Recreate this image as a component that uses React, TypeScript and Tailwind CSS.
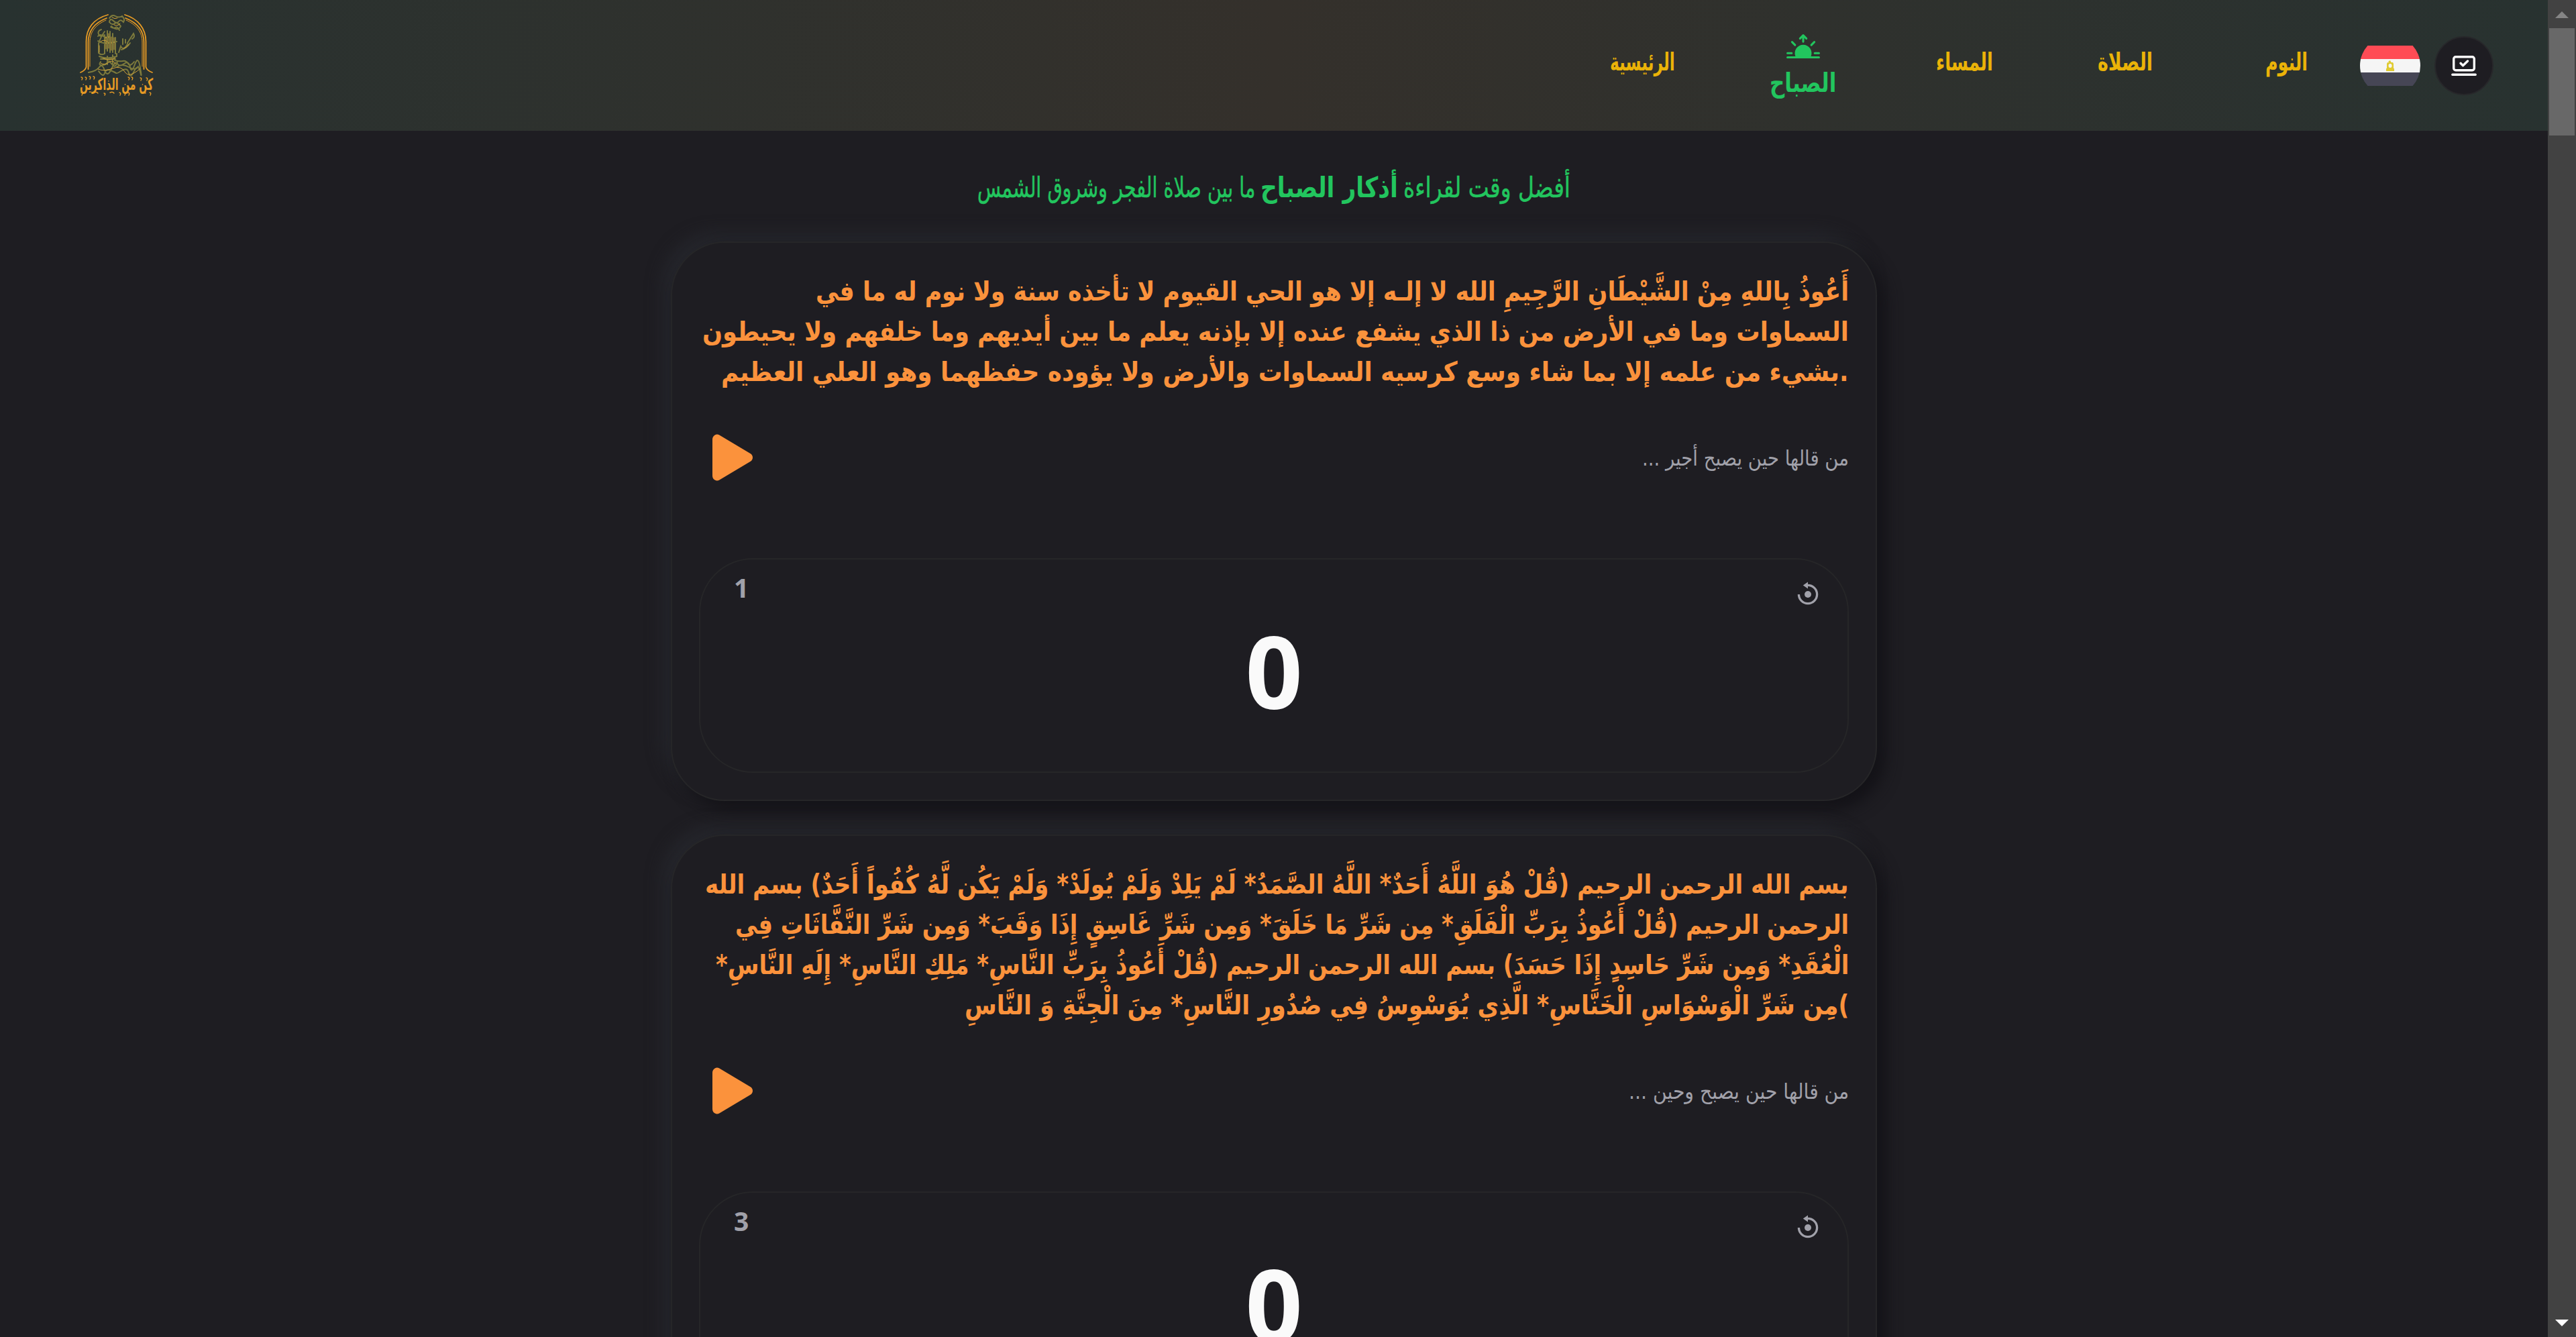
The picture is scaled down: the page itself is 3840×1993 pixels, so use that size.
import { useLayoutEffect, useRef, useState } from "react";
import { BsFillSunriseFill } from "react-icons/bs";
import { IoPlay } from "react-icons/io5";

// One line of text stretched or squeezed horizontally to a given measure.
function Fit({ text, width, className = "" }: { text: string; width: number; className?: string }) {
  const ref = useRef<HTMLSpanElement>(null);
  const [k, setK] = useState(1);
  useLayoutEffect(() => {
    const w = ref.current ? ref.current.offsetWidth : 0;
    if (w > 0) setK(width / w);
  }, [width, text]);
  return (
    <div dir="rtl" className={"flex justify-start whitespace-nowrap " + className} style={{ width }}>
      <span ref={ref} className="inline-block shrink-0 origin-right" style={{ transform: `scaleX(${k})` }}>
        {text}
      </span>
    </div>
  );
}

function Logo() {
  return (
    <svg className="h-[135px] w-[112px] overflow-visible" viewBox="118 20 112 135" fill="none" stroke="#e59a25" strokeLinecap="round">
      <g strokeWidth="1.8">
        <path d="M161 22C139 28 128.500 43 128.500 62V100Q127 105 120 108" />
        <path d="M159 27C141 34 131.500 46 131.500 63V103" />
        <path d="M158 30C142 37 134 48 134 63V99" strokeWidth="1" />
        <path d="M186 22C206 28 217.500 43 217.500 62V100Q219 105 227 108" />
        <path d="M187 27C205 34 214.500 46 214.500 63V103" />
        <path d="M188 30C204 37 212 48 212 63V99" strokeWidth="1" />
      </g>
      <g stroke="#7d7a3c" strokeWidth="2">
        <path d="M163 27q4-6 9-3t10 0q5 5 2 9-4-5-7-1t-8-1-6 2q4 5 8 2t9 4q-2 5-7 4t-7-4M165 40q4 3 7 1t6 4" />
        <path d="M156 47q-6 8-9 18v14q4 4 9 1V52m4-6v30m4-29v31m4-28v28m4-22v24m-21-36q-6 2-4 7t7 1m-8 9q8 6 28 1m-28-8q3-4 8 0t10 0" />
        <path d="M148 84q10 5 26 0v-4m-24 12q-4 5 2 5t8-4 7 3 8-4m-25-4h22M160 84v12m8-14v13" />
        <path d="M177 78l3-9q3 6 7 1t3-6l9-14q3 5-2 8M181 74q8-2 13-10M183 66v-8m4 6v-5" />
        <path d="M132 108q12-2 16-8t8 5 10-2 9-8 10 0 9 5 7-4 8 5 0 6-9-1-8 3-10-4-9 4-8-4-9 4-9-3M171 90q7 2 12 1t8 4 9-3M174 100q8-6 18 0t14-1" />
      </g>
      <g stroke="#d0a23a" strokeWidth="1">
        <path d="M167 26q4 3 8 1m-5 10q5 3 9-2M158 55v18m8-18v20m-12 12q9 5 18-1m-26 17q10 4 22-1t18 5 22-4M150 62q5-4 10 0M184 72q5-1 8-6M148 68v10m14-28v22m8-16v18m-20 20q6 4 12-1t10 2" />
      </g>
      <text
        x="228"
        y="134"
        fontSize="24"
        direction="rtl"
        textLength="109"
        lengthAdjust="spacingAndGlyphs"
        fill="#e59a25"
        stroke="none"
        className="font-bold [font-family:'DejaVu_Sans',sans-serif]"
      >
        كن من الذاكرين
      </text>
      <g strokeWidth="1.4">
        <path d="M121 115q3 0 1 4m5-4q3 0 1 4m5-5q3 0 1 4m5-4q3 0 1 4m51-3q3 0 1 4m4-4q3 0 1 4m12-3q3 0 1 4m8-4q3 0 1 4M121 138q3 0 1 4m18-4q4-2 6 1m9 0q3 0 1 3m8-4q4-2 6 1m8-1q3 0 1 4m6-4q3 0 1 4m5-4q3 0 1 4m19-4q4-2 6 1m6-1q3 0 1 4" />
      </g>
    </svg>
  );
}

function Flag() {
  return (
    <div className="flex h-[60px] w-[90px] items-center justify-center overflow-hidden">
      <div className="flex h-[90px] w-[90px] shrink-0 flex-col overflow-hidden rounded-full pt-[15px]">
        <div className="h-5 bg-[#ff4b55]" />
        <div className="flex h-5 items-center justify-center bg-[#f5f5f5]">
          <svg className="h-4 w-3" viewBox="0 0 12 16" fill="#e0cb33">
            <path d="M3 1.500L6 0l1.500 3H10l1 2v6.500l1 1V16H0v-3.500l1-1V5l1-2h2.500zM6 5a2.500 3 0 1 0 .1 6A2.500 3 0 0 0 6 5z" fillRule="evenodd" />
          </svg>
        </div>
        <div className="h-5 bg-[#464655]" />
      </div>
    </div>
  );
}

function Reset() {
  return (
    <svg className="size-[40px]" viewBox="0 0 40 40" fill="none">
      <path d="M6.400 20A13.600 13.600 0 1 0 20 6.400H18" stroke="#a1a1aa" strokeWidth="3.300" />
      <path d="M12.800 6.500L20 1.400v10.200z" fill="#a1a1aa" />
      <circle cx="20" cy="20" r="5" fill="#a1a1aa" />
    </svg>
  );
}

type Line = { t: string; w: number };

function Card({ lines, note, noteWidth, count }: { lines: Line[]; note: string; noteWidth: number; count: string }) {
  return (
    <section className="w-[1798px] rounded-[80px] border-2 border-[#262628] bg-[#1e1d22] p-10 shadow-[12px_12px_24px_#131217,-12px_-12px_24px_#26272d]">
      <div className="flex flex-col pt-[2px]">
        {lines.map((l) => (
          <Fit key={l.t} text={l.t} width={l.w} className="h-[60px] self-end text-[40px] leading-[60px] font-bold text-[#fb923c]" />
        ))}
      </div>
      <div className="mt-[50px] flex h-[96px] items-center justify-between">
        <IoPlay className="ml-[2px] size-24 text-[#fb923c]" />
        <Fit text={note} width={noteWidth} className="pt-[2px] text-[32px] leading-[40px] text-[#a1a1aa]" />
      </div>
      <div className="mt-[102px] h-[320px] rounded-[80px] border-2 border-[#262628]">
        <div className="flex h-[96px] items-start justify-between pt-[24px] pr-[39px] pl-[50px]">
          <span className="text-[39px] leading-[36px] font-bold text-[#a1a1aa] [font-family:'Open_Sans',sans-serif]">{count}</span>
          <div className="pt-[8px]">
            <Reset />
          </div>
        </div>
        <div className="text-center text-[149px] leading-[140px] font-bold text-[#fafafa] [font-family:'Open_Sans',sans-serif]">0</div>
      </div>
    </section>
  );
}

const nav = [
  { t: "الرئيسية", w: 97 },
  { t: "الصباح", w: 99, active: true },
  { t: "المساء", w: 85 },
  { t: "الصلاة", w: 82 },
  { t: "النوم", w: 63 },
];

export default function App() {
  return (
    <div className="flex h-[1993px] w-[3840px] overflow-hidden bg-[#1e1d22] [font-family:'DejaVu_Sans',sans-serif]">
      <main className="flex h-full w-[3798px] flex-col items-center overflow-hidden">
        <header className="flex h-[195px] w-full shrink-0 items-center bg-linear-to-r from-[#283230] via-[#34302b] to-[#283230] pr-[81px] pl-[118px]">
          <div className="h-[155px]">
            <Logo />
          </div>
          <nav className="ml-auto flex h-full">
            {nav.map((n) => (
              <a key={n.t} className="flex w-[240px] flex-col items-center pr-[2px]">
                {n.active ? (
                  <>
                    <BsFillSunriseFill className="mt-12 size-[50px] text-[#22c55e]" />
                    <Fit text={n.t} width={n.w} className="mt-[2px] text-[40px] leading-[46px] font-bold text-[#22c55e]" />
                  </>
                ) : (
                  <Fit text={n.t} width={n.w} className="mt-[70px] text-[37px] leading-[46px] font-bold text-[#eab308]" />
                )}
              </a>
            ))}
          </nav>
          <div className="-ml-[11px] flex items-center gap-[21px]">
            <Flag />
            <div className="flex size-[88px] items-center justify-center rounded-full border-2 border-[#27272a] bg-[#1e1d22]">
              <svg className="size-[40px]" viewBox="0 0 40 40" fill="none" stroke="#fff" strokeWidth="3.400" strokeLinecap="round" strokeLinejoin="round">
                <rect x="4.700" y="6.700" width="30.600" height="20" rx="3" />
                <path d="M2.800 33.300h34.400M15 16.300l3.500 3.500 7-6.800" />
              </svg>
            </div>
          </div>
        </header>
        <div dir="rtl" className="mt-[55px] flex h-[60px] gap-[8px] text-[42px] leading-[60px] text-[#22c55e]">
          <Fit text="أفضل وقت لقراءة" width={249} className="[-webkit-text-stroke:0.6px_#22c55e]" />
          <Fit text="أذكار الصباح" width={205} className="font-bold" />
          <Fit text="ما بين صلاة الفجر وشروق الشمس" width={414} className="[-webkit-text-stroke:0.6px_#22c55e]" />
        </div>
        <div className="mt-[50px] flex flex-col gap-[50px]">
          <Card
            count="1"
            note="من قالها حين يصبح أجير ..."
            noteWidth={308}
            lines={[
              { t: "أَعُوذُ بِاللهِ مِنْ الشَّيْطَانِ الرَّجِيمِ الله لا إلـه إلا هو الحي القيوم لا تأخذه سنة ولا نوم له ما في", w: 1540 },
              { t: "السماوات وما في الأرض من ذا الذي يشفع عنده إلا بإذنه يعلم ما بين أيديهم وما خلفهم ولا يحيطون", w: 1709 },
              { t: ".بشيء من علمه إلا بما شاء وسع كرسيه السماوات والأرض ولا يؤوده حفظهما وهو العلي العظيم", w: 1681 },
            ]}
          />
          <Card
            count="3"
            note="من قالها حين يصبح وحين ..."
            noteWidth={328}
            lines={[
              { t: "بسم الله الرحمن الرحيم (قُلْ هُوَ اللَّهُ أَحَدٌ* اللَّهُ الصَّمَدُ* لَمْ يَلِدْ وَلَمْ يُولَدْ* وَلَمْ يَكُن لَّهُ كُفُواً أَحَدٌ) بسم الله", w: 1705 },
              { t: "الرحمن الرحيم (قُلْ أَعُوذُ بِرَبِّ الْفَلَقِ* مِن شَرِّ مَا خَلَقَ* وَمِن شَرِّ غَاسِقٍ إِذَا وَقَبَ* وَمِن شَرِّ النَّفَّاثَاتِ فِي", w: 1660 },
              { t: "الْعُقَدِ* وَمِن شَرِّ حَاسِدٍ إِذَا حَسَدَ) بسم الله الرحمن الرحيم (قُلْ أَعُوذُ بِرَبِّ النَّاسِ* مَلِكِ النَّاسِ* إِلَهِ النَّاسِ*", w: 1689 },
              { t: ")مِن شَرِّ الْوَسْوَاسِ الْخَنَّاسِ* الَّذِي يُوَسْوِسُ فِي صُدُورِ النَّاسِ* مِنَ الْجِنَّةِ وَ النَّاسِ", w: 1318 },
            ]}
          />
        </div>
      </main>
      <aside className="flex h-full w-[42px] flex-col items-center bg-[#424242]">
        <svg className="h-[42px] w-[42px] shrink-0" viewBox="0 0 42 42" fill="#858585">
          <path d="M21 17l10 10H11z" />
        </svg>
        <div className="h-[160px] w-[38px] shrink-0 bg-[#686868]" />
        <svg className="mt-auto h-[42px] w-[42px] shrink-0" viewBox="0 0 42 42" fill="#fff">
          <path d="M11 16h20L21 26z" />
        </svg>
      </aside>
    </div>
  );
}
